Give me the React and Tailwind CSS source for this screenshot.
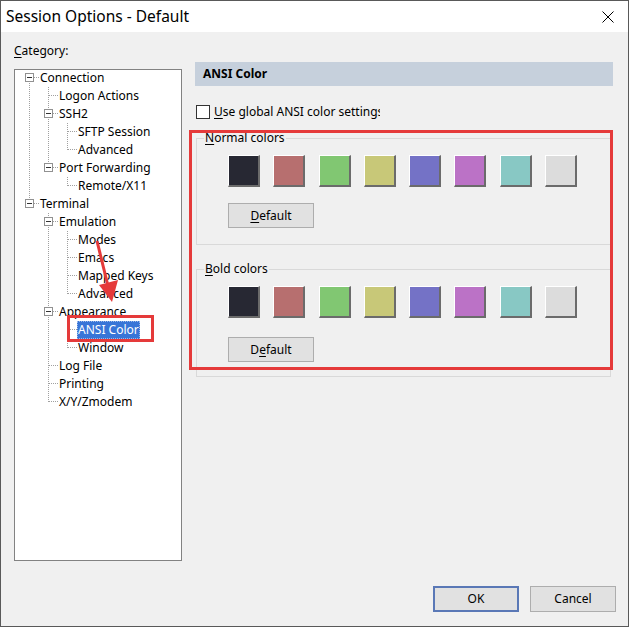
const FONT = { fontFamily: '"Noto Sans", "Liberation Sans", sans-serif' }

const tree = [
  { label: 'Connection', level: 0, open: true, next: true, anc: [] },
  { label: 'Logon Actions', level: 1, next: true, anc: [true] },
  { label: 'SSH2', level: 1, open: true, next: true, anc: [true] },
  { label: 'SFTP Session', level: 2, next: true, anc: [true, true] },
  { label: 'Advanced', level: 2, next: false, anc: [true, true] },
  { label: 'Port Forwarding', level: 1, open: true, next: false, anc: [true] },
  { label: 'Remote/X11', level: 2, next: false, anc: [true, false] },
  { label: 'Terminal', level: 0, open: true, next: false, prev: true, anc: [] },
  { label: 'Emulation', level: 1, open: true, next: true, anc: [false] },
  { label: 'Modes', level: 2, next: true, anc: [false, true] },
  { label: 'Emacs', level: 2, next: true, anc: [false, true] },
  { label: 'Mapped Keys', level: 2, next: true, anc: [false, true] },
  { label: 'Advanced', level: 2, next: false, anc: [false, true] },
  { label: 'Appearance', level: 1, open: true, next: true, anc: [false] },
  { label: 'ANSI Color', level: 2, next: true, anc: [false, true], selected: true },
  { label: 'Window', level: 2, next: false, anc: [false, true] },
  { label: 'Log File', level: 1, next: true, anc: [false] },
  { label: 'Printing', level: 1, next: true, anc: [false] },
  { label: 'X/Y/Zmodem', level: 1, next: false, anc: [false] },
]

const colors = ['#272833', '#b76f6f', '#81c772', '#c8c878', '#7472c6', '#bb72c6', '#88c8c4', '#dcdcdc']

function Cell({ down, up, elbow, box }) {
  return (
    <svg width="19" height="18" className="shrink-0 block">
      {up && <line x1="9.5" y1="0" x2="9.5" y2="9" stroke="#a0a0a0" strokeDasharray="1 1" />}
      {down && <line x1="9.5" y1="8" x2="9.5" y2="18" stroke="#a0a0a0" strokeDasharray="1 1" />}
      {elbow && <line x1="10" y1="8.5" x2="19" y2="8.5" stroke="#a0a0a0" strokeDasharray="1 1" />}
      {box && (
        <>
          <rect x="5.5" y="4.5" width="8" height="8" fill="#fff" stroke="#919191" />
          <line x1="7" y1="8.5" x2="12" y2="8.5" stroke="#333" />
        </>
      )}
    </svg>
  )
}

function TreeRow({ item }) {
  const isRootFirst = item.level === 0 && !item.prev
  return (
    <div className="flex items-center h-[18px]">
      {item.anc.map((on, i) => (
        <Cell key={i} up={on} down={on} />
      ))}
      <Cell up={!isRootFirst} down={item.next} elbow box={item.open} />
      <span
        className={
          'px-[1px] h-[18px] leading-[18px] whitespace-nowrap ' +
          (item.selected ? 'bg-[#3875d7] text-white outline outline-1 outline-dotted outline-[#9bb8e8] -outline-offset-1' : 'text-black')
        }
      >
        {item.label}
      </span>
    </div>
  )
}

function Swatch({ color }) {
  return (
    <div
      className="w-[32px] h-[32px] border-t border-l border-b-2 border-r-2 border-t-white border-l-white border-b-[#6b6b6b] border-r-[#6b6b6b]"
      style={{ backgroundColor: color }}
    />
  )
}

function WinButton({ children, primary }) {
  return (
    <button
      className={
        'w-[86px] h-[26px] bg-[#e1e1e1] text-black text-[12px] flex items-center justify-center ' +
        (primary ? 'border-2 border-[#5a78b6]' : 'border border-[#adadad]')
      }
    >
      {children}
    </button>
  )
}

function ColorGroup({ accel, rest, btnA, btnB, btnC, className, btnGap, bottom }) {
  return (
    <fieldset className={'border border-[#d9d9d9] w-[415px] ' + className}>
      <legend className="ml-[7px] px-[1px] leading-[18px]">
        <span className="underline underline-offset-2">{accel}</span>
        {rest}
      </legend>
      <div className="flex gap-[13.3px] mt-[8px] ml-[31px]">
        {colors.map((c, i) => (
          <Swatch key={i} color={c} />
        ))}
      </div>
      <div className={'ml-[31px] ' + btnGap + ' ' + bottom}>
        <button className="w-[86px] h-[25px] bg-[#e1e1e1] border border-[#adadad] text-[12px] text-black">
          {btnA}
          <span className="underline underline-offset-2">{btnB}</span>
          {btnC}
        </button>
      </div>
    </fieldset>
  )
}

export default function App() {
  return (
    <div className="relative w-[630px] h-[628px] bg-white text-[12px] text-black" style={FONT}>
      <div className="w-[629px] h-[627px] border border-[#595959] bg-[#f0f0f0] flex flex-col">
        <div className="h-[31px] bg-white flex items-center justify-between pl-[5px] pr-[14px] shrink-0">
          <span className="text-[15.5px] leading-none">Session Options - Default</span>
          <svg width="12" height="12" viewBox="0 0 12 12">
            <path d="M0.5 0.5 L11.5 11.5 M11.5 0.5 L0.5 11.5" stroke="#000" strokeWidth="1" />
          </svg>
        </div>

        <div className="flex flex-1">
          <div className="pl-[13px] pt-[10px] flex flex-col">
            <div className="leading-[18px]">
              <span className="underline underline-offset-2">C</span>ategory:
            </div>
            <div className="mt-[9px] w-[168px] h-[492px] bg-white border border-[#828282] pl-[5px]">
              <div className="-mt-px">
                {tree.map((item, i) => (
                  <TreeRow key={i} item={item} />
                ))}
              </div>
            </div>
          </div>

          <div className="ml-[13px] pt-[30px] flex flex-col">
            <div className="w-[418px] h-[24px] bg-[#c6d0dc] flex items-center pl-[8px] font-bold">
              ANSI Color
            </div>
            <div className="flex items-center mt-[17px] ml-[1px]">
              <div className="w-[14px] h-[14px] bg-white border border-[#333]" />
              <div className="ml-[4px] w-[166px] overflow-hidden whitespace-nowrap leading-[18px]">
                <span className="underline underline-offset-2">U</span>se global ANSI color settings
              </div>
            </div>
            <ColorGroup
              accel="N"
              rest="ormal colors"
              btnA=""
              btnB="D"
              btnC="efault"
              btnGap="mt-[16px]"
              bottom="pb-[16px]"
              className="mt-[8px] ml-[1px]"
            />
            <ColorGroup
              accel="B"
              rest="old colors"
              btnA="D"
              btnB="e"
              btnC="fault"
              btnGap="mt-[19px]"
              bottom="pb-[14px]"
              className="mt-[15px] ml-[1px]"
            />
          </div>
        </div>

        <div className="flex justify-end gap-[11px] pr-[12px] pb-[14px] pt-[2px]">
          <WinButton primary>OK</WinButton>
          <WinButton>Cancel</WinButton>
        </div>
      </div>

      {/* annotations */}
      <div className="absolute left-[189px] top-[130px] w-[424px] h-[240px] border-[3px] border-[#e53a3a]" />
      <div className="absolute left-[67px] top-[315px] w-[87px] h-[27px] border-[3px] border-[#e53a3a]" />
      <svg className="absolute left-0 top-0" width="630" height="628" style={{ pointerEvents: 'none' }}>
        <line x1="97" y1="241" x2="108" y2="286" stroke="#e53a3a" strokeWidth="3" />
        <polygon points="99,285 118,280 112,302" fill="#e53a3a" />
      </svg>
    </div>
  )
}
